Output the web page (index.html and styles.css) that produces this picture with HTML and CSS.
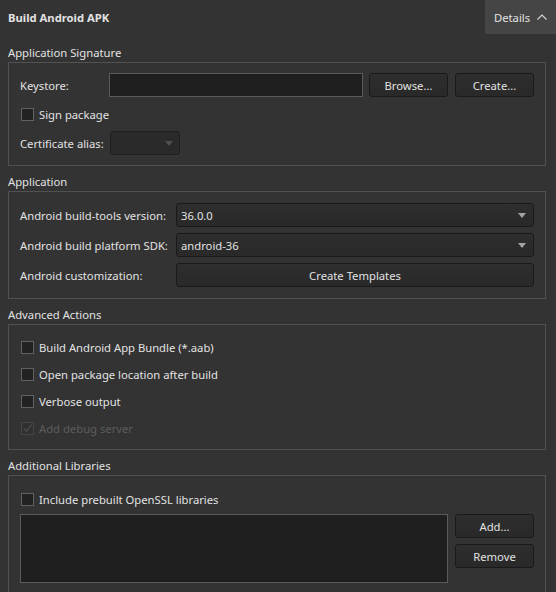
FILE: index.html
```html
<!DOCTYPE html>
<html lang="en">
<head>
    <meta charset="UTF-8">
    <title>Build Android APK</title>
    <link rel="stylesheet" href="styles.css">
</head>
<body>
<div class="topbar">
    <span class="topbar-title">Build Android APK</span>
    <button class="details-btn">Details
        <svg width="10" height="6" viewBox="0 0 10 6"><polyline points="0.5,5.5 5,1 9.5,5.5" fill="none" stroke="#d8d8d8" stroke-width="1.1"/></svg>
    </button>
</div>

<div class="group first">
    <div class="group-title">Application Signature</div>
    <div class="group-box">
        <div class="row">
            <label class="label label-sig">Keystore:</label>
            <div class="line-edit keystore"></div>
            <button class="btn btn-browse">Browse...</button>
            <button class="btn">Create...</button>
        </div>
        <label class="check-row check-sign"><span class="check"></span>Sign package</label>
        <div class="row">
            <label class="label label-alias">Certificate alias:</label>
            <div class="combo combo-alias disabled">
                <span class="combo-text"></span>
                <svg width="8" height="5" viewBox="0 0 8 5"><polygon points="0,0 8,0 4,5" fill="#4f4f4f"/></svg>
            </div>
        </div>
    </div>
</div>

<div class="group">
    <div class="group-title">Application</div>
    <div class="group-box app">
        <div class="row">
            <label class="label label-app">Android build-tools version:</label>
            <div class="combo">
                <span class="combo-text">36.0.0</span>
                <svg width="8" height="5" viewBox="0 0 8 5"><polygon points="0,0 8,0 4,5" fill="#a3a3a3"/></svg>
            </div>
        </div>
        <div class="row">
            <label class="label label-app">Android build platform SDK:</label>
            <div class="combo">
                <span class="combo-text">android-36</span>
                <svg width="8" height="5" viewBox="0 0 8 5"><polygon points="0,0 8,0 4,5" fill="#a3a3a3"/></svg>
            </div>
        </div>
        <div class="row">
            <label class="label label-app">Android customization:</label>
            <button class="btn btn-wide">Create Templates</button>
        </div>
    </div>
</div>

<div class="group">
    <div class="group-title">Advanced Actions</div>
    <div class="group-box actions">
        <label class="check-row"><span class="check"></span>Build Android App Bundle (*.aab)</label>
        <label class="check-row"><span class="check"></span>Open package location after build</label>
        <label class="check-row"><span class="check"></span>Verbose output</label>
        <label class="check-row disabled">
            <span class="check">
                <svg width="11" height="11" viewBox="0 0 11 11"><polyline points="2,5.5 4.5,8.5 9.5,1.5" fill="none" stroke="#4a4a4a" stroke-width="1.3"/></svg>
            </span>Add debug server
        </label>
    </div>
</div>

<div class="group">
    <div class="group-title">Additional Libraries</div>
    <div class="group-box libs">
        <label class="check-row"><span class="check"></span>Include prebuilt OpenSSL libraries</label>
        <div class="libs-row">
            <div class="list-box"></div>
            <div class="libs-buttons">
                <button class="btn">Add...</button>
                <button class="btn">Remove</button>
            </div>
        </div>
    </div>
</div>
</body>
</html>
```

FILE: styles.css
```css
* {
    margin: 0;
    padding: 0;
    box-sizing: border-box;
}

html,
body {
    width: 100%;
    height: 100%;
    overflow: hidden;
}

body {
    background-color: #333333;
    color: #e2e2e2;
    font: 11.25px "Noto Sans", "Open Sans", sans-serif;
}

button {
    font: inherit;
    color: inherit;
}

/* top bar */
.topbar {
    height: 34px;
    display: flex;
    align-items: center;
    padding-left: 8px;
}

.topbar-title {
    font-weight: bold;
}

.details-btn {
    margin-left: auto;
    width: 71px;
    height: 34px;
    display: flex;
    align-items: center;
    gap: 7px;
    padding-left: 9px;
    border: none;
    background-color: #454545;
}

/* group boxes */
.group {
    margin: 7px 10px 0 8px;
}

.group.first {
    margin-top: 10px;
}

.group-title {
    height: 18px;
    line-height: 18px;
}

.group-box {
    border: 1px solid #515151;
    padding: 10px 11px;
    display: flex;
    flex-direction: column;
    gap: 6px;
}

.row {
    height: 24px;
    display: flex;
    align-items: center;
}

.label {
    flex: none;
    white-space: nowrap;
}

.label-sig {
    width: 89px;
}

.label-alias {
    width: 90px;
}

.label-app {
    width: 156px;
}

.line-edit {
    height: 24px;
    background-color: #1f1f1f;
    border: 1px solid #5c5c5c;
}

.keystore {
    flex: 1;
    margin-right: 6px;
}

.btn {
    width: 79px;
    height: 24px;
    flex: none;
    border: 1px solid #1a1a1a;
    border-radius: 3px;
    background: linear-gradient(#2e2e2e, #292929);
    cursor: pointer;
}

.btn-browse {
    margin-right: 7px;
}

.btn-wide {
    flex: 1;
    width: auto;
}

.combo {
    flex: 1;
    height: 24px;
    display: flex;
    align-items: center;
    padding: 0 7px 0 4px;
    border: 1px solid #1a1a1a;
    border-radius: 3px;
    background: linear-gradient(#2e2e2e, #292929);
}

.combo-text {
    flex: 1;
}

.combo-alias {
    flex: none;
    width: 70px;
    padding-right: 6px;
    background: #2a2a2a;
    border-color: #1f1f1f;
}

.app {
    padding: 11px;
}

/* check boxes */
.check-row {
    height: 21px;
    display: flex;
    align-items: center;
    gap: 5px;
    white-space: nowrap;
}

.check-sign {
    height: 22px;
}

.check {
    width: 13px;
    height: 13px;
    margin-left: 1px;
    flex: none;
    border: 1px solid #616161;
    background-color: #222222;
    display: flex;
    align-items: center;
    justify-content: center;
}

.check-row.disabled {
    color: #5c5c5c;
}

.check-row.disabled .check {
    border-color: #454545;
    background-color: #303030;
}

.actions {
    padding-top: 12px;
}

/* libraries */
.libs {
    padding-top: 13px;
    gap: 4px;
}

.libs-row {
    display: flex;
    gap: 7px;
}

.list-box {
    flex: 1;
    height: 69px;
    background-color: #1f1f1f;
    border: 1px solid #5c5c5c;
}

.libs-buttons {
    display: flex;
    flex-direction: column;
    gap: 6px;
}
```
